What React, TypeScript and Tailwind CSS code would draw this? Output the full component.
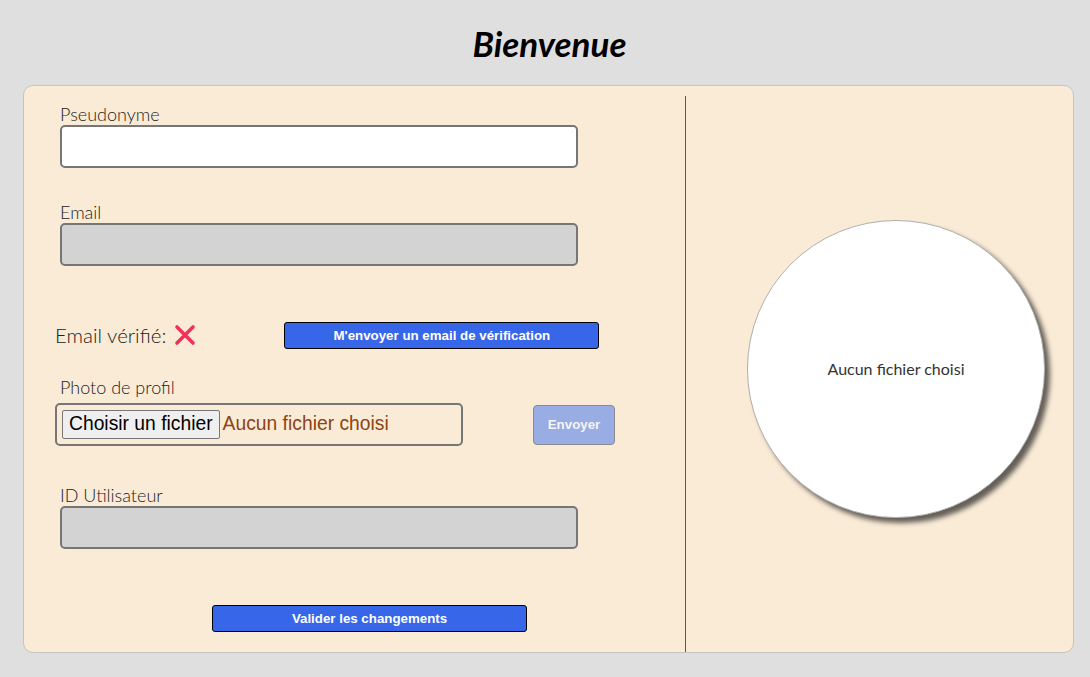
import React from "react";

const labelCls = "block h-5 leading-5 text-[18px] font-light text-[#222] [font-family:Lato,'Open_Sans',sans-serif]";
const inputBase = "block w-[518px] h-[43px] rounded-[5px] border-2 border-[#767676] outline-none px-2";

function Field({ label, gray, className }: { label: string; gray?: boolean; className?: string }) {
  return (
    <div className={className}>
      <label className={labelCls}>{label}</label>
      <input
        type="text"
        disabled={gray}
        className={`${inputBase} mt-px ${gray ? "bg-[#d3d3d3]" : "bg-white"}`}
      />
    </div>
  );
}

function BlueButton({ children, className }: { children: React.ReactNode; className?: string }) {
  return (
    <button
      type="button"
      className={`block h-[27px] w-[315px] rounded-[3px] border border-black bg-[#3766e8] text-white text-[13.3px] font-bold [font-family:'Liberation_Sans',Arial,sans-serif] ${className ?? ""}`}
    >
      {children}
    </button>
  );
}

export default function App() {
  return (
    <div className="min-h-[677px] w-full bg-[#e0dfe0] pt-[23px] [font-family:Lato,'Open_Sans',sans-serif]">
      <h1 className="pl-[9px] text-center text-[35px] leading-[40px] font-bold italic text-black">Bienvenue</h1>
      <div className="mx-[23px] mt-[22px] flex h-[568px] w-[1051px] rounded-[10px] border border-[#c4c4c4] bg-[#faebd7]">
        {/* left column */}
        <div className="mt-[10px] w-[662px] border-r border-[#5e5850] pl-[36px] pt-[8px]">
          <Field label="Pseudonyme" />
          <Field label="Email" gray className="mt-[34px]" />

          <div className="mt-[56px] flex h-[27px] items-center -ml-[5px]">
            <span className="text-[20.5px] font-light text-[#222]">Email vérifié:</span>
            <svg width="22" height="22" viewBox="0 0 22 22" className="ml-[8px] mt-[-2px]">
              <path d="M3 3 L19 19 M19 3 L3 19" stroke="#f0325a" strokeWidth="3.6" strokeLinecap="round" />
            </svg>
            <BlueButton className="ml-[88px]">M'envoyer un email de vérification</BlueButton>
          </div>

          <div className="mt-[28px]">
            <label className={labelCls}>Photo de profil</label>
            <div className="mt-[6px] flex items-center">
              <div className="-ml-[5px] flex h-[43px] w-[408px] items-center rounded-[5px] border-2 border-[#767676] px-[5px] [font-family:'Liberation_Sans',Arial,sans-serif]">
                <span className="flex h-[29px] items-center rounded-[2px] border border-[#767676] bg-[#efefef] px-[6px] text-[19.3px] text-black">
                  Choisir un fichier
                </span>
                <span className="ml-[3px] text-[19.3px] text-[#8b4513]">Aucun fichier choisi</span>
              </div>
              <button
                type="button"
                className="ml-[70px] h-[40px] w-[82px] rounded-[4px] border border-[#8a8a8a] bg-[#99ace4] text-[13.3px] font-bold text-[#f5f5f5] [font-family:'Liberation_Sans',Arial,sans-serif]"
              >
                Envoyer
              </button>
            </div>
          </div>

          <Field label="ID Utilisateur" gray className="mt-[39px]" />

          <BlueButton className="ml-[152px] mt-[56px]">Valider les changements</BlueButton>
        </div>

        {/* right column */}
        <div className="flex flex-1 items-center pl-[61px]">
          <div className="flex h-[298px] w-[298px] items-center justify-center rounded-full border border-[#b0b0b0] bg-white shadow-[5px_5px_5px_rgba(0,0,0,0.6)]">
            <span className="text-[16px] text-[#333]">Aucun fichier choisi</span>
          </div>
        </div>
      </div>
    </div>
  );
}
